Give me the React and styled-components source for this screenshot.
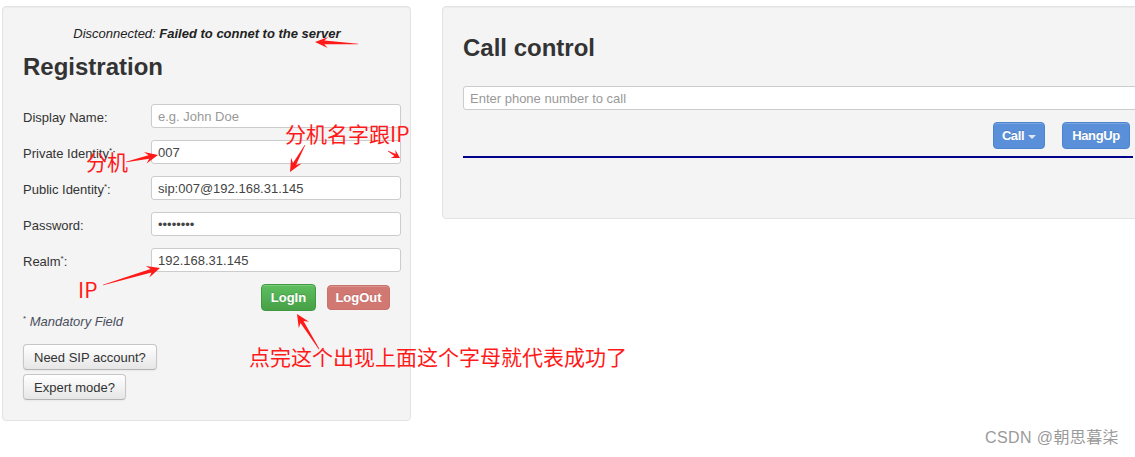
import React from 'react';
import styled, { createGlobalStyle } from 'styled-components';

const GlobalStyle = createGlobalStyle`
  html, body {
    margin: 0;
    padding: 0;
    background: #fff;
    overflow: hidden;
  }
  body {
    font-family: "Liberation Sans", Arial, sans-serif;
    font-size: 13px;
    color: #333;
  }
`;

const Page = styled.div`
  position: relative;
  width: 1135px;
  height: 457px;
  overflow: hidden;
  box-sizing: border-box;
  padding: 6px 0 0 2px;
  display: flex;
  align-items: flex-start;
  gap: 31px;
`;

const Well = styled.div`
  box-sizing: border-box;
  flex: none;
  background: #f4f4f4;
  border: 1px solid #e3e3e3;
  border-radius: 4px;
  box-shadow: inset 0 1px 1px rgba(0, 0, 0, 0.04);
`;

const LeftWell = styled(Well)`
  width: 409px;
  padding: 18px 10px 20px 20px;
  display: flex;
  flex-direction: column;
`;

const RightWell = styled(Well)`
  width: 730px;
  height: 213px;
  padding: 27px 0 0 20px;
  display: flex;
  flex-direction: column;
`;

const Status = styled.div`
  text-align: center;
  padding-right: 9px;
  line-height: 18px;
  font-style: italic;
  color: #222;

  b {
    font-weight: bold;
  }
`;

const Heading = styled.h2`
  margin: ${(p) => p.$top || 0}px 0 0;
  font-size: 24px;
  line-height: 28px;
  font-weight: bold;
  color: #333;
  white-space: nowrap;
`;

const Form = styled.div`
  margin-top: 23px;
  display: grid;
  grid-template-columns: 128px 250px;
  row-gap: 12px;
  align-items: center;
`;

const Label = styled.label`
  color: #333;
  line-height: 18px;
  padding-top: 4px;
  white-space: nowrap;
`;

const Req = styled.sup`
  font-size: 8px;
  line-height: 0;
  vertical-align: 5px;
`;

const Field = styled.input`
  box-sizing: border-box;
  width: ${(p) => p.$w || '100%'};
  height: 24px;
  margin: 0;
  padding: 0 6px;
  border: 1px solid #ccc;
  border-radius: 3px;
  background: #fff;
  font-family: "Liberation Sans", Arial, sans-serif;
  font-size: 13px;
  color: #444;
  outline: none;

  &::placeholder {
    color: #999;
  }
`;

const ButtonRow = styled.div`
  margin-top: ${(p) => p.$top || 0}px;
  display: flex;
  justify-content: flex-end;
  align-items: center;
  gap: ${(p) => p.$gap || 11}px;
  padding-right: ${(p) => p.$right || 0}px;
`;

const Btn = styled.button`
  box-sizing: border-box;
  height: ${(p) => p.$h || 26}px;
  margin: 0;
  padding: 0 10px;
  border-radius: 4px;
  font-family: "Liberation Sans", Arial, sans-serif;
  font-size: 13px;
  line-height: 1;
  cursor: pointer;
`;

const ActionBtn = styled(Btn)`
  width: ${(p) => p.$w}px;
  padding: 0;
  color: #fff;
  font-weight: bold;
  border: 1px solid ${(p) => p.$border};
  background: ${(p) => p.$bg};
  text-shadow: 0 -1px 0 rgba(0, 0, 0, 0.15);
  box-shadow: inset 0 1px 0 rgba(255, 255, 255, 0.2);
`;

const PlainBtn = styled(Btn)`
  align-self: flex-start;
  color: #333;
  border: 1px solid #c6c6c6;
  border-bottom-color: #b3b3b3;
  background: linear-gradient(#fff, #e6e6e6);
  box-shadow: inset 0 1px 0 rgba(255, 255, 255, 0.2), 0 1px 2px rgba(0, 0, 0, 0.05);
  margin-top: ${(p) => p.$top || 0}px;
`;

const Note = styled.div`
  margin-top: 2px;
  line-height: 18px;
  color: #444;

  i {
    color: #4a4f5c;
  }
`;

const Caret = styled.span`
  display: inline-block;
  width: 0;
  height: 0;
  margin-left: 4px;
  vertical-align: middle;
  border-top: 4px solid #dfe7f5;
  border-left: 4px solid transparent;
  border-right: 4px solid transparent;
`;

const PhoneWrap = styled.div`
  margin-top: 24px;
  height: 24px;
`;

const CallRow = styled.div`
  width: 670px;
  margin-top: 12px;
  display: flex;
  justify-content: flex-end;
  gap: 17px;
  padding-right: 3px;
  box-sizing: border-box;
`;

const BlueBtn = styled(ActionBtn)`
  letter-spacing: -0.4px;
`;

const Rule = styled.div`
  width: 670px;
  height: 2px;
  margin-top: 7px;
  background: #00008b;
`;

const Note2 = styled.span`
  position: absolute;
  left: ${(p) => p.$x}px;
  top: ${(p) => p.$y}px;
  font-family: "Noto Sans CJK SC", "Liberation Sans", sans-serif;
  font-size: 21px;
  line-height: 24px;
  color: #ff1a1a;
  white-space: nowrap;
  pointer-events: none;
`;

const Overlay = styled.svg`
  position: absolute;
  left: 0;
  top: 0;
  pointer-events: none;
`;

const Watermark = styled.span`
  position: absolute;
  left: 985px;
  top: 429px;
  font-family: "Liberation Sans", "Noto Sans CJK SC", sans-serif;
  font-size: 16px;
  line-height: 18px;
  letter-spacing: 0.4px;
  color: #9a9a9a;
  white-space: nowrap;
`;

// tapered annotation arrow, thin at the tail and widening into a barbed head
const arrow = (x1, y1, x2, y2, head = 13, wing = 6, shaft = 1.8) => {
  const dx = x2 - x1;
  const dy = y2 - y1;
  const len = Math.hypot(dx, dy);
  const ux = dx / len;
  const uy = dy / len;
  const nx = -uy;
  const ny = ux;
  const bx = x2 - ux * head;
  const by = y2 - uy * head;
  const kx = x2 - ux * head * 0.72;
  const ky = y2 - uy * head * 0.72;
  const pts = [
    [x1 + nx * 0.3, y1 + ny * 0.3],
    [kx + nx * shaft, ky + ny * shaft],
    [bx + nx * wing, by + ny * wing],
    [x2, y2],
    [bx - nx * wing, by - ny * wing],
    [kx - nx * shaft, ky - ny * shaft],
    [x1 - nx * 0.3, y1 - ny * 0.3],
  ];
  return pts.map((p) => p.map((v) => v.toFixed(1)).join(',')).join(' ');
};

const arrows = [
  [358, 44, 315, 42, 13, 5.5, 1.8],
  [126, 162, 158, 155, 13, 6, 1.8],
  [305, 145, 290, 172, 13, 6, 1.8],
  [388, 151, 400, 158, 8, 4.5, 1.2],
  [103, 285, 160, 268, 13, 6, 1.8],
  [319, 349, 297, 314, 13, 6, 1.8],
];

const fields = [
  { label: 'Display Name:', placeholder: 'e.g. John Doe' },
  { label: 'Private Identity', req: true, value: '007' },
  { label: 'Public Identity', req: true, value: 'sip:007@192.168.31.145' },
  { label: 'Password:', value: '12345678', type: 'password' },
  { label: 'Realm', req: true, value: '192.168.31.145' },
];

export default function App() {
  return (
    <>
      <GlobalStyle />
      <Page>
        <LeftWell>
          <Status>
            Disconnected: <b>Failed to connet to the server</b>
          </Status>
          <Heading $top={10}>Registration</Heading>
          <Form>
            {fields.map((f) => (
              <React.Fragment key={f.label}>
                <Label>
                  {f.label}
                  {f.req && (
                    <>
                      <Req>*</Req>:
                    </>
                  )}
                </Label>
                <Field
                  type={f.type || 'text'}
                  placeholder={f.placeholder}
                  defaultValue={f.value}
                />
              </React.Fragment>
            ))}
          </Form>
          <ButtonRow $top={12} $right={10}>
            <ActionBtn $w={55} $h={27} $bg="linear-gradient(#5ebf5e, #47a047)" $border="#3f9a3f">
              LogIn
            </ActionBtn>
            <ActionBtn $w={63} $h={25} $bg="#d17873" $border="#cc716c">
              LogOut
            </ActionBtn>
          </ButtonRow>
          <Note>
            <Req>*</Req> <i>Mandatory Field</i>
          </Note>
          <PlainBtn $top={13}>Need SIP account?</PlainBtn>
          <PlainBtn $top={4}>Expert mode?</PlainBtn>
        </LeftWell>

        <RightWell>
          <Heading>Call control</Heading>
          <PhoneWrap>
            <Field $w="700px" placeholder="Enter phone number to call" />
          </PhoneWrap>
          <CallRow>
            <BlueBtn $w={52} $h={27} $bg="#5a90d9" $border="#4d84cf">
              Call<Caret />
            </BlueBtn>
            <BlueBtn $w={68} $h={27} $bg="#5a90d9" $border="#4d84cf">
              HangUp
            </BlueBtn>
          </CallRow>
          <Rule />
        </RightWell>

        <Overlay width="1135" height="457" viewBox="0 0 1135 457">
          {arrows.map((a, i) => (
            <polygon key={i} points={arrow(...a)} fill="#ff1a1a" />
          ))}
        </Overlay>
        <Note2 $x={285} $y={121}>分机名字跟IP</Note2>
        <Note2 $x={86} $y={149}>分机</Note2>
        <Note2 $x={78} $y={277}>IP</Note2>
        <Note2 $x={249} $y={344}>点完这个出现上面这个字母就代表成功了</Note2>
        <Watermark>CSDN @朝思暮柒</Watermark>
      </Page>
    </>
  );
}
